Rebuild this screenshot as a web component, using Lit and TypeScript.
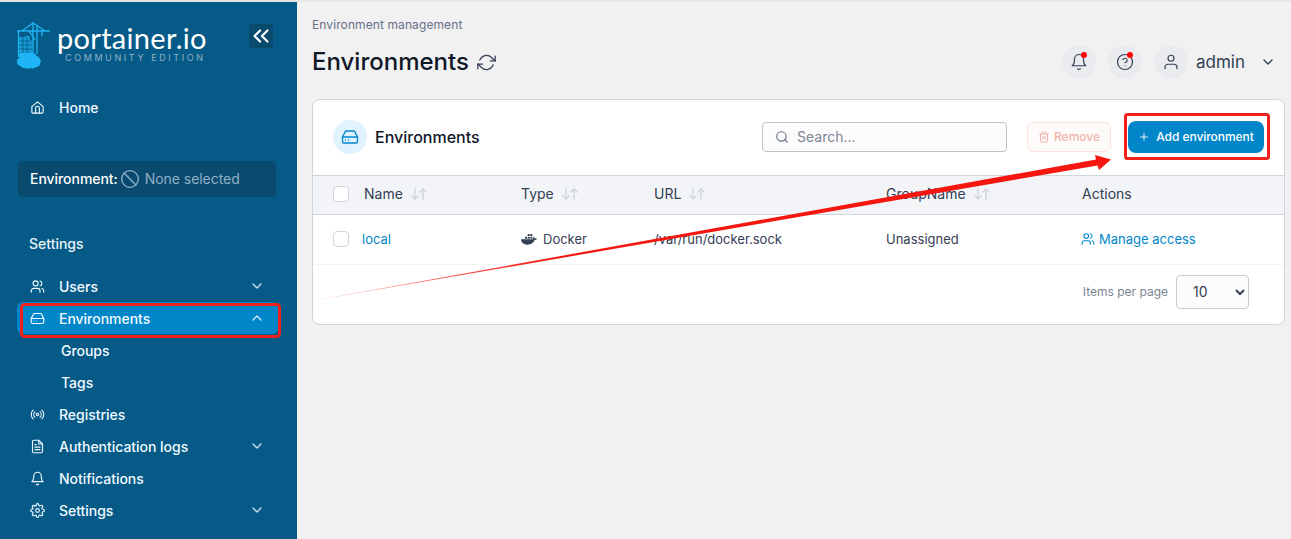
import { LitElement, html, css, svg } from 'lit';
import { customElement } from 'lit/decorators.js';

const icons: Record<string, unknown> = {
  home: svg`<path d="M3 10.5 12 3l9 7.5V19a2 2 0 0 1-2 2H5a2 2 0 0 1-2-2z"/><path d="M9 21v-8a3 3 0 0 1 6 0v8"/>`,
  users: svg`<path d="M16 21v-2a4 4 0 0 0-4-4H6a4 4 0 0 0-4 4v2"/><circle cx="9" cy="7" r="4"/><path d="M22 21v-2a4 4 0 0 0-3-3.87"/><path d="M16 3.13a4 4 0 0 1 0 7.75"/>`,
  drive: svg`<path d="M22 12H2"/><path d="M5.45 5.11 2 12v6a2 2 0 0 0 2 2h16a2 2 0 0 0 2-2v-6l-3.45-6.89A2 2 0 0 0 16.76 4H7.24a2 2 0 0 0-1.79 1.11z"/><path d="M6 16h.01M10 16h.01"/>`,
  radio: svg`<path d="M4.9 19.1C1 15.2 1 8.8 4.9 4.9"/><path d="M7.8 16.2c-2.3-2.3-2.3-6.1 0-8.5"/><circle cx="12" cy="12" r="2"/><path d="M16.2 7.8c2.3 2.3 2.3 6.1 0 8.5"/><path d="M19.1 4.9C23 8.8 23 15.1 19.1 19"/>`,
  file: svg`<path d="M14 2H6a2 2 0 0 0-2 2v16a2 2 0 0 0 2 2h12a2 2 0 0 0 2-2V8z"/><path d="M14 2v6h6"/><path d="M16 13H8M16 17H8M10 9H8"/>`,
  bell: svg`<path d="M18 8A6 6 0 0 0 6 8c0 7-3 9-3 9h18s-3-2-3-9"/><path d="M13.73 21a2 2 0 0 1-3.46 0"/>`,
  gear: svg`<circle cx="12" cy="12" r="3"/><path d="M19.4 15a1.65 1.65 0 0 0 .33 1.82l.06.06a2 2 0 1 1-2.83 2.83l-.06-.06a1.65 1.65 0 0 0-2.82 1.17V21a2 2 0 0 1-4 0v-.09A1.65 1.65 0 0 0 7.3 19.7l-.06.06a2 2 0 1 1-2.83-2.83l.06-.06a1.65 1.65 0 0 0-1.17-2.82H3a2 2 0 0 1 0-4h.09A1.65 1.65 0 0 0 4.3 7.3l-.06-.06a2 2 0 1 1 2.83-2.83l.06.06A1.65 1.65 0 0 0 10 3.3V3a2 2 0 0 1 4 0v.09a1.65 1.65 0 0 0 2.82 1.17l.06-.06a2 2 0 1 1 2.83 2.83l-.06.06A1.65 1.65 0 0 0 20.7 10H21a2 2 0 0 1 0 4h-.09a1.65 1.65 0 0 0-1.51 1z"/>`,
  down: svg`<path d="m6 9 6 6 6-6"/>`,
  up: svg`<path d="m18 15-6-6-6 6"/>`,
  help: svg`<circle cx="12" cy="12" r="10"/><path d="M9.09 9a3 3 0 0 1 5.83 1c0 2-3 3-3 3"/><path d="M12 17h.01"/>`,
  user: svg`<path d="M20 21v-2a4 4 0 0 0-4-4H8a4 4 0 0 0-4 4v2"/><circle cx="12" cy="7" r="4"/>`,
  refresh: svg`<path d="M23 4v6h-6"/><path d="M1 20v-6h6"/><path d="M3.51 9a9 9 0 0 1 14.85-3.36L23 10M1 14l4.64 4.36A9 9 0 0 0 20.49 15"/>`,
  search: svg`<circle cx="11" cy="11" r="8"/><path d="m21 21-4.35-4.35"/>`,
  trash: svg`<path d="M3 6h18"/><path d="M19 6v14a2 2 0 0 1-2 2H7a2 2 0 0 1-2-2V6"/><path d="M8 6V4a2 2 0 0 1 2-2h4a2 2 0 0 1 2 2v2"/><path d="M10 11v6M14 11v6"/>`,
  plus: svg`<path d="M12 5v14M5 12h14"/>`,
  ban: svg`<circle cx="12" cy="12" r="10"/><path d="m4.9 4.9 14.2 14.2"/>`,
};

const icon = (name: string, size = 16, sw = 2) => html`
  <svg class="icon" width=${size} height=${size} viewBox="0 0 24 24" fill="none" stroke="currentColor"
    stroke-width=${sw} stroke-linecap="round" stroke-linejoin="round">${icons[name]}</svg>
`;

const sortIcon = html`
  <svg class="sort" width="18" height="14" viewBox="0 0 18 14" fill="none" stroke="#d0d5dd" stroke-width="1.4">
    <path d="M5 1v11M1.500 8.500 5 12l3.500-3.500"/><path d="M13 13V2M9.500 5.500 13 2l3.500 3.500"/>
  </svg>
`;

const navItems = [
  { label: 'Users', icon: 'users', chevron: 'down' },
  { label: 'Environments', icon: 'drive', chevron: 'up', active: true },
  { label: 'Groups', sub: true },
  { label: 'Tags', sub: true },
  { label: 'Registries', icon: 'radio' },
  { label: 'Authentication logs', icon: 'file', chevron: 'down' },
  { label: 'Notifications', icon: 'bell' },
  { label: 'Settings', icon: 'gear', chevron: 'down' },
];

@customElement('app-root')
export class AppRoot extends LitElement {
  static styles = css`
    :host {
      display: flex;
      position: relative;
      width: 1291px;
      height: 539px;
      overflow: hidden;
      box-sizing: border-box;
      border-top: 2px solid #e6e6e6;
      background: #f1f1f2;
      color: #101828;
      font-family: Inter, "Liberation Sans", sans-serif;
      font-size: 13px;
    }
    * { box-sizing: border-box; }
    .icon { flex: none; display: block; }

    .sidebar {
      flex: none;
      width: 297px;
      background: #065a87;
      color: #fff;
      display: flex;
      flex-direction: column;
    }
    .brand {
      display: flex;
      height: 72px;
      padding: 20px 24px 0 17px;
    }
    .brand-text { margin-left: 6px; }
    .brand-name {
      font-family: Lato, sans-serif;
      font-size: 29px;
      line-height: 30px;
      letter-spacing: 0.3px;
      margin-top: 1px;
    }
    .brand-edition {
      font-size: 9px;
      line-height: 10px;
      letter-spacing: 2.6px;
      color: #8fb2c9;
      margin-left: 8px;
      white-space: nowrap;
    }
    .collapse {
      margin-left: auto;
      margin-top: 2px;
      width: 24px;
      height: 24px;
      border-radius: 4px;
      background: #0b4a6f;
      display: flex;
      align-items: center;
      justify-content: center;
      color: #fff;
    }
    .home {
      display: flex;
      align-items: center;
      height: 32px;
      margin-top: 17px;
      padding-left: 30px;
      gap: 14px;
      font-size: 14px;
      font-weight: 500;
      color: #f0f9ff;
    }
    .env-box {
      display: flex;
      align-items: center;
      margin: 38px 21px 0 18px;
      height: 36px;
      padding: 0 0 1px 12px;
      background: #0b4a6f;
      border-radius: 4px;
      font-size: 14px;
      font-weight: 500;
      letter-spacing: -0.05px;
      gap: 2px;
    }
    .env-none {
      display: flex;
      align-items: center;
      gap: 5px;
      font-weight: 400;
      color: #8fb0c6;
    }
    .settings-title {
      margin: 38px 0 0 29px;
      font-size: 14px;
      font-weight: 500;
      line-height: 18px;
      color: #e6f1f7;
    }
    .nav {
      display: flex;
      flex-direction: column;
      margin: 17px 19px 0 17px;
    }
    .nav-item {
      display: flex;
      align-items: center;
      height: 32px;
      padding: 0 13px;
      gap: 14px;
      font-size: 14px;
      font-weight: 500;
      letter-spacing: -0.03px;
      color: #f0f9ff;
      border-radius: 6px;
    }
    .nav-item.active { background: #0086c9; }
    .nav-item.sub { padding-left: 44px; }
    .nav-item .chev { margin-left: auto; opacity: 0.85; }

    .main {
      flex: 1;
      min-width: 0;
      padding: 15px 6px 0 15px;
    }
    .crumb {
      font-size: 12px;
      line-height: 16px;
      letter-spacing: 0.1px;
      color: #667085;
    }
    .topbar {
      display: flex;
      align-items: center;
      height: 36px;
      margin-top: 11px;
    }
    .page-title {
      font-size: 24px;
      font-weight: 500;
      line-height: 32px;
      color: #101828;
    }
    .refresh { margin-left: 8px; color: #344054; }
    .top-actions {
      margin-left: auto;
      display: flex;
      align-items: center;
      gap: 12px;
      color: #344054;
      padding-right: 9px;
    }
    .round {
      position: relative;
      width: 34px;
      height: 34px;
      border-radius: 50%;
      background: #e9ebef;
      display: flex;
      align-items: center;
      justify-content: center;
    }
    .dot {
      position: absolute;
      top: 7px;
      right: 9px;
      width: 6px;
      height: 6px;
      border-radius: 50%;
      background: #f00;
    }
    .admin {
      font-size: 17px;
      margin-left: -4px;
      margin-right: 3px;
      color: #344054;
    }

    .card {
      margin-top: 19px;
      height: 226px;
      background: #fff;
      border: 1px solid #d0d5dd;
      border-radius: 8px;
      overflow: hidden;
    }
    .card-head {
      display: flex;
      align-items: center;
      height: 75px;
      padding: 0 20px 2px;
    }
    .head-icon {
      width: 34px;
      height: 34px;
      border-radius: 50%;
      background: #e0f2fe;
      color: #0086c9;
      display: flex;
      align-items: center;
      justify-content: center;
      margin-right: 8px;
    }
    .card-title { font-size: 16px; font-weight: 500; }
    .search {
      display: flex;
      align-items: center;
      gap: 8px;
      margin-left: auto;
      width: 245px;
      height: 30px;
      padding-left: 12px;
      background: #fcfcfd;
      border: 1px solid #bfc3c9;
      border-radius: 4px;
      font-size: 14px;
      color: #667085;
    }
    .search span { color: #7c8491; }
    .btn {
      display: flex;
      align-items: center;
      justify-content: center;
      font-size: 12px;
      font-weight: 500;
      border-radius: 8px;
    }
    .remove {
      width: 84px;
      height: 30px;
      margin-left: 20px;
      gap: 4px;
      color: #eeb4ae;
      border: 1px solid #fde0dc;
      background: #fffafa;
      border-radius: 6px;
    }
    .add {
      width: 136px;
      height: 32px;
      margin-left: 17px;
      gap: 6px;
      letter-spacing: -0.05px;
      background: #0086c9;
      color: #fff;
    }
    .row {
      display: grid;
      grid-template-columns: 31px 157px 133px 232px 196px 1fr;
      align-items: center;
      padding-left: 20px;
      color: #344054;
    }
    .row.header {
      height: 40px;
      padding-bottom: 3px;
      background: #f2f4f7;
      border-top: 1px solid #d0d5dd;
      border-bottom: 1px solid #d0d5dd;
      font-size: 14px;
    }
    .row.body {
      height: 50px;
      padding-bottom: 1px;
      border-bottom: 1px solid #f2f4f7;
      font-size: 13px;
    }
    .check {
      width: 16px;
      height: 16px;
      border: 1px solid #d0d5dd;
      border-radius: 4px;
      background: #fff;
    }
    .th { display: flex; align-items: center; gap: 7px; }
    .link { color: #0086c9; }
    .local { margin-left: -2px; }
    .cell { display: flex; align-items: center; gap: 6px; }
    .access { margin-left: -1px; gap: 4px; }
    .card-foot {
      display: flex;
      align-items: center;
      justify-content: flex-end;
      height: 60px;
      padding: 0 35px 7px 0;
      gap: 8px;
      font-size: 12px;
      color: #7c8491;
    }
    select {
      width: 73px;
      height: 34px;
      padding-left: 12px;
      font-family: inherit;
      font-size: 14px;
      color: #344054;
      background: #fcfcfd;
      border: 1px solid #c8ccd2;
      border-radius: 4px;
    }

    .overlay {
      position: absolute;
      left: 0;
      top: -2px;
      pointer-events: none;
    }
  `;

  render() {
    return html`
      <aside class="sidebar">
        <div class="brand">
          <svg width="34" height="48" viewBox="0 0 34 48" fill="none">
            <g stroke="#1fb4f5" stroke-width="1.300">
              <path d="M0 9h33M5 9l11-8 12 8M16 0v32M20 3v29M12 9l6 9M25 9v5"/>
              <path d="M1.500 9v26"/>
            </g>
            <path d="M2 15h6v-1h5v4h2v13H2z" fill="#1fb4f5" opacity="0.7"/>
            <path d="M2 19h13M2 23h13M2 27h13M6 15v16M10 15v16" stroke="#065a87" stroke-width="0.8"/>
            <path d="M2 35c-1-2 0-4 3-4h11c3 0 4 3 2 4z" fill="#1fb4f5"/>
            <path d="M7 46c-2 0-3-1-3-2-3 0-4-2-4-4 0-3 2-5 5-5 1-2 3-3 6-3 2 0 4 1 5 2 3-1 6 0 7 3 1 1 1 3 0 5 0 2-2 3-4 3-1 1-3 2-5 1-2 1-5 1-7 0z" fill="#1fb4f5"/>
          </svg>
          <div class="brand-text">
            <div class="brand-name">portainer.io</div>
            <div class="brand-edition">COMMUNITY EDITION</div>
          </div>
          <div class="collapse">
            <svg width="22" height="22" viewBox="0 0 24 24" fill="none" stroke="currentColor" stroke-width="2.400" stroke-linecap="round" stroke-linejoin="round">
              <path d="m11 18-6-6 6-6M19 18l-6-6 6-6"/>
            </svg>
          </div>
        </div>

        <div class="home">${icon('home', 15, 1.8)}<span>Home</span></div>

        <div class="env-box">
          <span>Environment:</span>
          <span class="env-none">${icon('ban', 20, 1.600)}None selected</span>
        </div>

        <div class="settings-title">Settings</div>

        <nav class="nav">
          ${navItems.map(item => html`
            <div class="nav-item ${item.active ? 'active' : ''} ${item.sub ? 'sub' : ''}">
              ${item.icon ? icon(item.icon, 15, 1.8) : ''}
              <span>${item.label}</span>
              ${item.chevron ? html`<span class="chev">${icon(item.chevron, 16, 2)}</span>` : ''}
            </div>
          `)}
        </nav>
      </aside>

      <main class="main">
        <div class="crumb">Environment management</div>
        <div class="topbar">
          <div class="page-title">Environments</div>
          <span class="refresh">${icon('refresh', 19, 1.600)}</span>
          <div class="top-actions">
            <div class="round">${icon('bell', 18, 1.600)}<span class="dot"></span></div>
            <div class="round">${icon('help', 18, 1.600)}<span class="dot"></span></div>
            <div class="round">${icon('user', 18, 1.600)}</div>
            <span class="admin">admin</span>
            ${icon('down', 16, 2)}
          </div>
        </div>

        <section class="card">
          <div class="card-head">
            <div class="head-icon">${icon('drive', 18, 1.800)}</div>
            <div class="card-title">Environments</div>
            <div class="search">${icon('search', 14, 2)}<span>Search...</span></div>
            <div class="btn remove">${icon('trash', 12, 2)}Remove</div>
            <div class="btn add">${icon('plus', 12, 1.800)}Add environment</div>
          </div>

          <div class="row header">
            <div class="check"></div>
            <div class="th">Name ${sortIcon}</div>
            <div class="th">Type ${sortIcon}</div>
            <div class="th">URL ${sortIcon}</div>
            <div class="th">GroupName ${sortIcon}</div>
            <div class="th">Actions</div>
          </div>
          <div class="row body">
            <div class="check"></div>
            <div class="link local">local</div>
            <div class="cell">
              <svg width="16" height="12" viewBox="0 0 24 17" fill="#344054">
                <path d="M6 5h3v3H6zM10 5h3v3h-3zM14 5h3v3h-3zM10 1h3v3h-3zM14 1h3v3h-3z"/>
                <path d="M0 9h18c.5-1 .4-2.500.2-3.800l1-.2c.8.800 1.200 1.700 1.300 2.500.9-.2 2.200-.1 3.500.6-.8 1.500-2 2-3.500 2C18.500 15 15 17 9.500 17 3 17 0 13 0 9z"/>
              </svg>
              Docker
            </div>
            <div>/var/run/docker.sock</div>
            <div>Unassigned</div>
            <div class="cell link access">${icon('users', 14, 1.800)}Manage access</div>
          </div>
          <div class="card-foot">
            <span>Items per page</span>
            <select><option>10</option></select>
          </div>
        </section>
      </main>

      <svg class="overlay" width="1291" height="539" fill="none">
        <defs>
          <linearGradient id="tail" gradientUnits="userSpaceOnUse" x1="300" y1="303" x2="560" y2="256">
            <stop offset="0" stop-color="#f5170f" stop-opacity="0.25"/>
            <stop offset="1" stop-color="#f5170f"/>
          </linearGradient>
        </defs>
        <rect x="21.500" y="304.500" width="258" height="32" rx="3" stroke="#f0201c" stroke-width="3"/>
        <rect x="1125.500" y="114.500" width="143" height="44" rx="2" stroke="#f0201c" stroke-width="3"/>
        <path d="M300 303 L1096 159.500 L1095 155 L1111 159.500 L1099 170 L1097.500 165.500 z" fill="url(#tail)" stroke="none"/>
      </svg>
    `;
  }
}
